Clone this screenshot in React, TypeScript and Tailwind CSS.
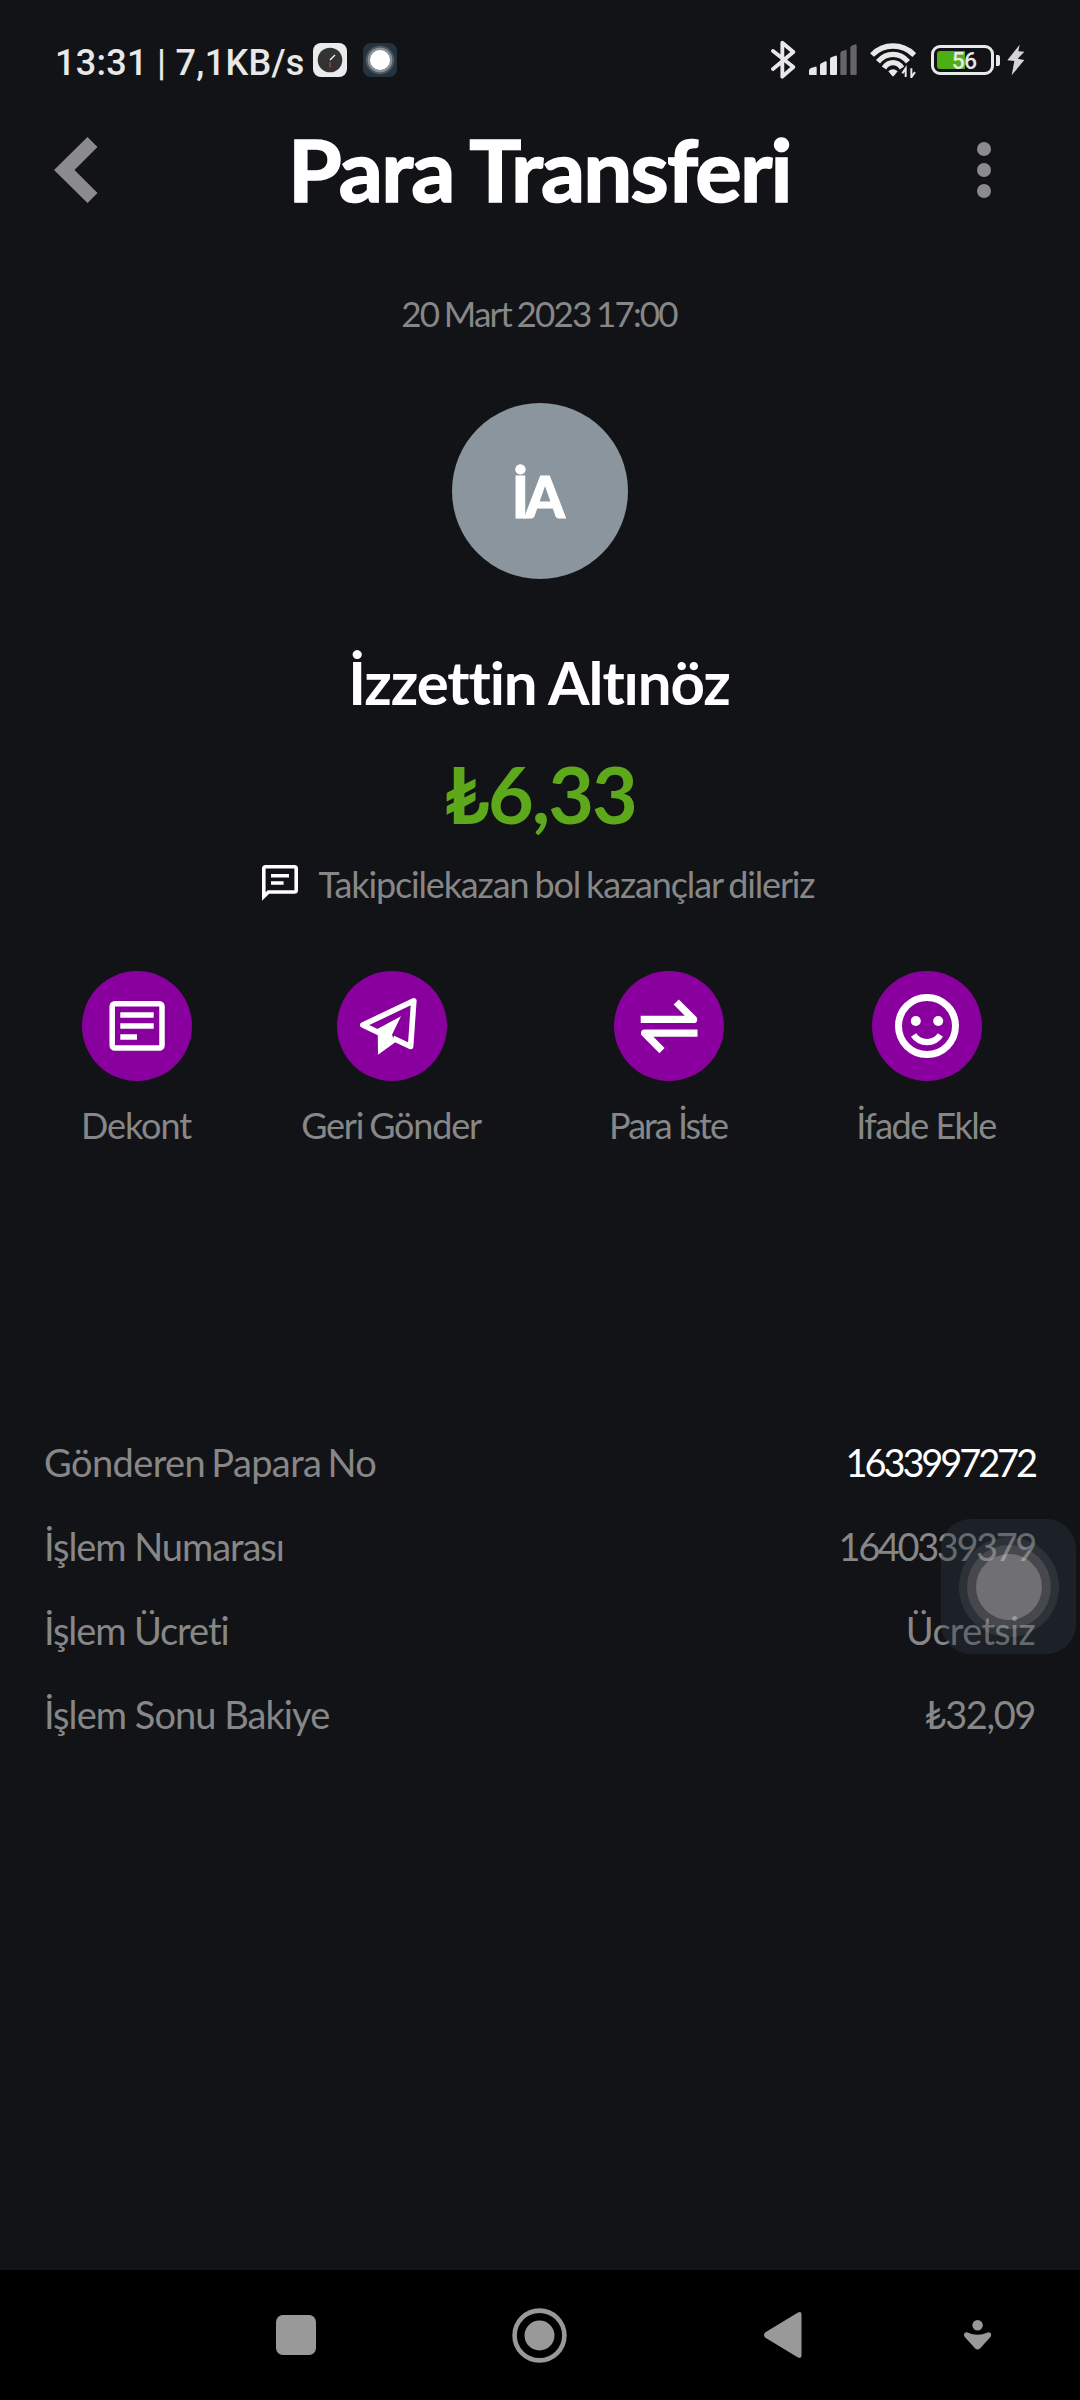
import type { ReactNode } from 'react'

type Action = {
  label: string
  column: string
  tracking: string
  icon: ReactNode
}

type Detail = {
  label: string
  value: string
  labelTracking: string
  valueClass: string
}

const actions: Action[] = [
  {
    label: 'Dekont',
    column: 'w-[274px]',
    tracking: 'tracking-[-1.1px]',
    icon: (
      <>
        <rect x="30.2" y="32.8" width="49.8" height="44.2" rx="2.6" fill="none" stroke="white" strokeWidth="5.5" />
        <path d="M38.3 44h33.4M38.3 55h33.4M38.3 66H55" stroke="white" strokeWidth="5.5" />
      </>
    ),
  },
  {
    label: 'Geri Gönder',
    column: 'w-[236px]',
    tracking: 'tracking-[-1.2px] [word-spacing:-2px]',
    icon: (
      <>
        <path
          d="M42 61.7L25.8 54L76.8 29.8L73.6 75.5L56 67.3"
          fill="none"
          stroke="white"
          strokeWidth="5.6"
          strokeLinejoin="round"
        />
        <path d="M40.7 57.7L64 45.3L55 63.7L58.3 71.3L41 83.7Z" fill="white" />
      </>
    ),
  },
  {
    label: 'Para İste',
    column: 'w-[318px]',
    tracking: 'tracking-[-2px]',
    icon: (
      <path
        d="M26.7 48.4H79.6L62.2 31M83.5 62.2H30.6L48 79.6"
        fill="none"
        stroke="white"
        strokeWidth="7.3"
        strokeLinejoin="round"
      />
    ),
  },
  {
    label: 'İfade Ekle',
    column: 'w-[198px]',
    tracking: 'tracking-[-1.5px]',
    icon: (
      <>
        <circle cx="55" cy="55" r="28.5" fill="none" stroke="white" strokeWidth="7" />
        <circle cx="43.8" cy="50" r="5" fill="white" />
        <circle cx="66.2" cy="50" r="5" fill="white" />
        <path d="M41.6 64A16.2 16.2 0 0 0 68.4 64" fill="none" stroke="white" strokeWidth="6.4" />
      </>
    ),
  },
]

const details: Detail[] = [
  {
    label: 'Gönderen Papara No',
    value: '1633997272',
    labelTracking: 'tracking-[-0.6px] [word-spacing:-3px]',
    valueClass: 'text-white tracking-[-3.1px]',
  },
  {
    label: 'İşlem Numarası',
    value: '1640339379',
    labelTracking: 'tracking-[-1.05px]',
    valueClass: 'tracking-[-2.4px]',
  },
  {
    label: 'İşlem Ücreti',
    value: 'Ücretsiz',
    labelTracking: 'tracking-[-1.1px]',
    valueClass: 'tracking-[-0.7px]',
  },
  {
    label: 'İşlem Sonu Bakiye',
    value: '₺32,09',
    labelTracking: 'tracking-[-0.95px]',
    valueClass: 'tracking-[-1.4px]',
  },
]

function StatusBar() {
  return (
    <div className="flex items-center justify-between h-[120px] pl-[55px] pr-[55px] text-[#e8e8e8]">
      <div className="flex items-center">
        <span className="w-[258px] mt-[5px] whitespace-nowrap font-['Roboto',sans-serif] font-medium text-[36px] leading-[42px] tracking-[0.3px]">
          13:31 | 7,1KB/s
        </span>
        <svg width="34" height="34" viewBox="0 0 34 34">
          <rect width="34" height="34" rx="8" fill="#ebebeb" />
          <circle cx="17" cy="17" r="12.3" fill="#333333" />
          <path d="M17 17l5-5" stroke="white" strokeWidth="1.2" />
          <path d="M17 19v5.5" stroke="#b03a3a" strokeWidth="1.4" />
        </svg>
        <svg className="ml-4" width="34" height="34" viewBox="0 0 34 34">
          <rect width="34" height="34" rx="8" fill="#26323c" />
          <circle cx="17" cy="17" r="14.6" fill="#48535b" />
          <circle cx="17" cy="17" r="12.4" fill="#8b9297" />
          <circle cx="17" cy="17" r="10" fill="white" />
        </svg>
      </div>

      <div className="flex items-center">
        {/* bluetooth */}
        <svg width="25" height="40" viewBox="92 60 75 120" fill="none" stroke="currentColor" strokeWidth="11.5" strokeLinejoin="round" strokeLinecap="round">
          <path d="M98 93L159 141L126 170V68L159 96L98 147" />
        </svg>
        {/* mobile signal */}
        <svg className="ml-[13px]" width="48" height="32" viewBox="207 75 144 96" fill="currentColor">
          <path d="M207 154Q208 149 213 147L226 143Q230 142 230 147V168H210Q207 168 207 165Z" />
          <path d="M240 139Q240 135 244 133L256 127Q260 126 260 131V165Q260 168 257 168H243Q240 168 240 165Z" />
          <path d="M270 121Q270 117 274 115L286 110Q291 108 291 114V165Q291 168 288 168H273Q270 168 270 165Z" />
          <path d="M301 103Q301 99 305 97L316 93Q320 91 320 97V165Q320 168 317 168H304Q301 168 301 165Z" fill="#656568" />
          <path d="M331 86Q331 82 335 80L346 76Q350 75 350 80V165Q350 168 347 168H334Q331 168 331 165Z" fill="#656568" />
        </svg>
        {/* wifi */}
        <svg className="ml-[13px]" width="46" height="36" viewBox="389 68 138 108" fill="none" stroke="currentColor" strokeWidth="16">
          <path d="M395 107Q421 80 458 80T522 107" />
          <path d="M413 127Q432 105 458 105T503 127" />
          <path d="M431 146Q442 130 458 130T485 146" />
          <path d="M444 156Q458 143 472 156L461 169Q458 172 455 169Z" fill="currentColor" stroke="none" />
          <path d="M486 162L496 147V173M524 158L513 174V147" strokeWidth="6" />
        </svg>
        {/* battery */}
        <div className="flex items-center ml-[15px]">
          <div className="relative w-[63px] h-[30px] rounded-[9px] border-[3px] border-[#e8e8e8] p-[3px]">
            <div className="w-[28px] h-[18px] rounded-l-[3px] bg-[#4cb015]" />
            <span className="absolute inset-0 flex items-center justify-center pl-[3px] pt-[2px] font-['Roboto',sans-serif] font-medium text-[23px] leading-none tracking-[-0.7px]">
              56
            </span>
          </div>
          <div className="w-[4px] h-[11px] ml-[2px] rounded-r-[2px] bg-[#e8e8e8]" />
        </div>
        <svg className="ml-[7px]" width="18" height="32" viewBox="802 74 54 96" fill="#d4d4d4">
          <path d="M840 76L803 123L824 125L816 168L854 122L834 118L854 97L836 96Z" />
        </svg>
      </div>
    </div>
  )
}

function Header() {
  return (
    <header className="flex items-center h-[97px] pl-[54px] pr-[89px]">
      <svg className="mt-[3px]" width="44" height="66" viewBox="0 0 44 66" fill="#8b8b8d">
        <path d="M33.5 0L43.5 10L20.5 33L43.5 56L33.5 66L0 33Z" />
      </svg>
      <h1 className="flex-1 pl-[4px] text-center whitespace-nowrap text-[87px] leading-[97px] font-bold text-white tracking-[-1.8px] [word-spacing:-1px] [-webkit-text-stroke:1.6px_white]">
        Para Transferi
      </h1>
      <div className="flex flex-col gap-[7px] mt-[3px]">
        <span className="size-[14px] rounded-full bg-[#8b8b8d]" />
        <span className="size-[14px] rounded-full bg-[#8b8b8d]" />
        <span className="size-[14px] rounded-full bg-[#8b8b8d]" />
      </div>
    </header>
  )
}

function NavigationBar() {
  return (
    <nav className="flex items-center h-[130px] pl-[276px] bg-black">
      <div className="size-[40px] rounded-[7px] bg-[#999999]" />
      <svg className="ml-[196px]" width="55" height="55" viewBox="0 0 55 55">
        <circle cx="27.5" cy="27.5" r="24.9" fill="none" stroke="#999999" strokeWidth="4.6" />
        <circle cx="27.5" cy="27.5" r="15" fill="#999999" />
      </svg>
      <svg className="ml-[197px]" width="38" height="48" viewBox="0 0 38 48" fill="#999999">
        <path d="M1 21.5L34 1.5Q37.5 0 37.5 3.5V44.5Q37.5 48 34 46.5L1 26.5Q-1 24 1 21.5Z" />
      </svg>
      <svg className="ml-[162px]" width="28" height="32" viewBox="0 0 28 32" fill="#999999">
        <circle cx="13.6" cy="6.2" r="5.2" />
        <path d="M3.5 13.4Q13.6 18 23.7 13.4Q26.4 12.8 27.1 15Q27.4 16.8 26 18.4L16 29.4Q13.6 31.6 11.2 29.4L1.2 18.4Q-.2 16.8.1 15Q.8 12.8 3.5 13.4Z" />
      </svg>
    </nav>
  )
}

// Floating touch shortcut that stays above the page
function AssistiveTouch() {
  return (
    <div className="absolute left-[941px] top-[1519px] flex items-center justify-center size-[135px] rounded-[30px] bg-[#2d3a44]/38">
      <div className="flex items-center justify-center size-[100px] rounded-full bg-white/8">
        <div className="flex items-center justify-center size-[84px] rounded-full bg-[#fff0e4]/12">
          <div className="size-[66px] rounded-full bg-[#fff8ee]/23" />
        </div>
      </div>
    </div>
  )
}

export default function App() {
  return (
    <div className="relative flex flex-col w-[1080px] h-[2400px] overflow-hidden bg-[#121317] text-[#878788] font-['Lato','Noto_Sans',sans-serif]">
      <StatusBar />
      <Header />

      <main className="flex-1 flex flex-col">
        <section className="flex flex-col items-center">
          <p className="mt-[75px] pr-[2px] text-[35px] leading-[42px] tracking-[-1.85px] [word-spacing:-1.5px]">20 Mart 2023 17:00</p>
          <div className="flex items-center justify-center size-[176px] mt-[69px] rounded-full bg-[#8b959d]">
            <span className="text-[57px] leading-[68px] pt-[9px] pr-[7px] font-black text-white tracking-[-4px] [-webkit-text-stroke:1px_white]">
              İA
            </span>
          </div>
          <h2 className="mt-[67px] pr-[2px] text-[60px] leading-[72px] font-bold text-white tracking-[-1.1px]">İzzettin Altınöz</h2>
          <p className="mt-[28px] text-[79px] leading-[95px] font-bold text-[#5ea81b] tracking-[-2px]">₺6,33</p>
          <div className="flex items-center mt-5 pr-[4px]">
            <svg className="-mt-[2px]" width="36" height="36" viewBox="0 0 20 20" fill="none" stroke="white" strokeWidth="2">
              <path d="M1 17.5V2Q1 1 2 1H18Q19 1 19 2V14Q19 15 18 15H3.6Z" />
              <path d="M5 6h10M5 10h7" />
            </svg>
            <p className="ml-[21px] mt-[2px] text-[36px] leading-[43px] whitespace-nowrap tracking-[-1.15px] [word-spacing:-2px]">
              Takipcilekazan bol kazançlar dileriz
            </p>
          </div>
        </section>

        <section className="flex mt-[65px]">
          {actions.map((action) => (
            <button key={action.label} className={`flex flex-col items-center ${action.column}`}>
              <svg className="rounded-full bg-[#8a009e]" width="110" height="110" viewBox="0 0 110 110">
                {action.icon}
              </svg>
              <span className={`mt-[23px] pr-[2px] text-[36px] leading-[43px] whitespace-nowrap ${action.tracking}`}>
                {action.label}
              </span>
            </button>
          ))}
        </section>

        <dl className="mt-[273px] pl-[44px] pr-[45px] text-[38px] leading-[84px]">
          {details.map((row) => (
            <div key={row.label} className="flex justify-between">
              <dt className={row.labelTracking}>{row.label}</dt>
              <dd className={row.valueClass}>{row.value}</dd>
            </div>
          ))}
        </dl>
      </main>

      <NavigationBar />
      <AssistiveTouch />
    </div>
  )
}
